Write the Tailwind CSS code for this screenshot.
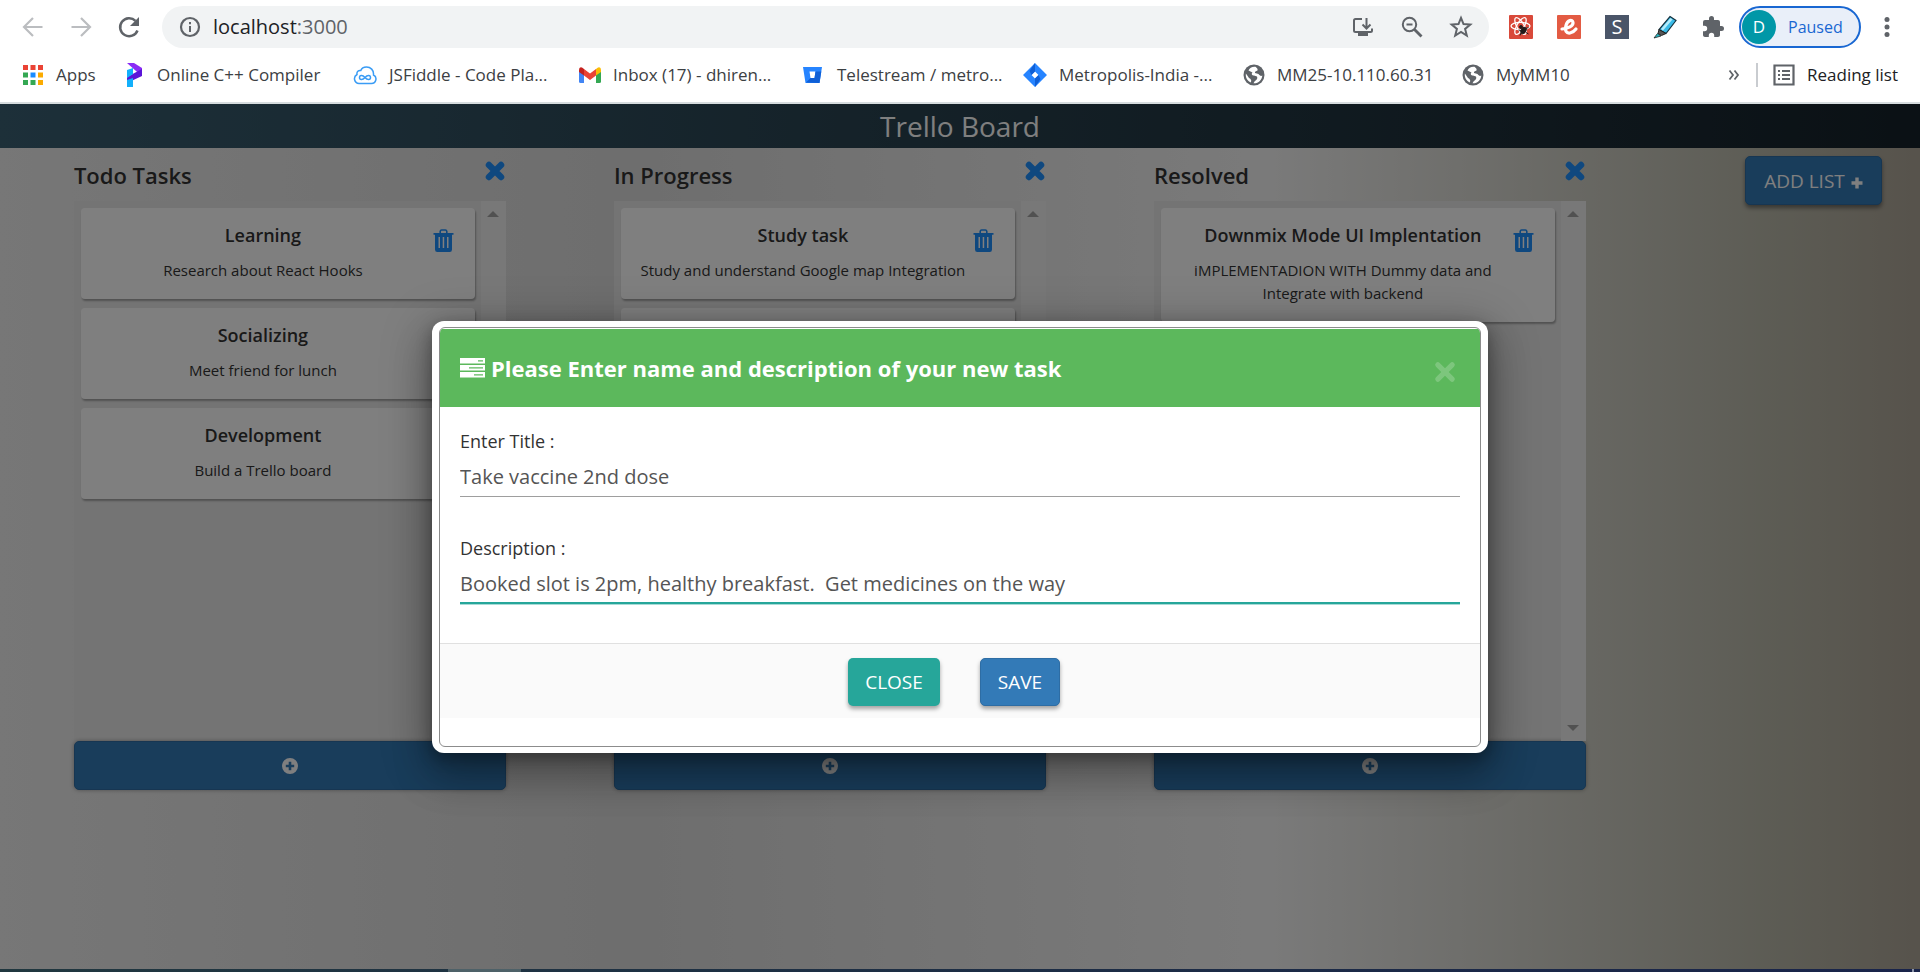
<!DOCTYPE html>
<html lang="en">
<head>
<meta charset="utf-8">
<title>Trello Board</title>
<script src="https://cdn.jsdelivr.net/npm/@tailwindcss/browser@4"></script>
</head>
<body class="flex min-h-screen flex-col overflow-hidden bg-white font-['Open_Sans','Noto_Sans',sans-serif] text-[#333]">

<!-- shared symbols -->
<svg class="hidden" aria-hidden="true">
  <symbol id="times" viewBox="0 0 20 20"><path d="M4.500 4.500 15.500 15.500M15.500 4.500 4.500 15.500" stroke="currentColor" stroke-width="5.800" stroke-linecap="round" fill="none"/></symbol>
  <symbol id="trash" viewBox="0 0 21 23"><path d="M7.2 4.5V2.3Q7.4 1 8.6 1H12.400Q13.600 1 13.800 2.300V4.500" fill="none" stroke="currentColor" stroke-width="1.600"/><path fill="currentColor" fill-rule="evenodd" d="M0.500 4H20.500V5.800H19V20.500Q19 23 16.700 23H4.300Q2 23 2 20.500V5.800H0.500ZM5.500 8V19H7V8ZM9.700 8V19H11.200V8ZM14 8V19H15.500V8Z"/></symbol>
  <symbol id="plus-circle" viewBox="0 0 16 16"><path fill="currentColor" fill-rule="evenodd" d="M8 0A8 8 0 1 0 8 16A8 8 0 1 0 8 0ZM6.700 3.800H9.300V6.700H12.200V9.300H9.300V12.200H6.700V9.300H3.800V6.700H6.700Z"/></symbol>
  <symbol id="globe" viewBox="0 0 22 22"><circle cx="11" cy="11" r="10.500" fill="#5f6368"/><path fill="#fff" d="M12.500 2.800C9 2.500 6.500 4 5.500 6.500L9.500 8.500C8 10 9 11.500 11 11.500L14 12.500C15 14.500 13.500 16 11.500 17.500L10.500 19.300C15.500 19.600 19 16 19.300 11.500C18 12.500 16.500 11.500 15.500 10L12 9C11.500 7.500 13 7 14.500 6.500C15 5 14 4 12.500 2.800ZM2.900 9.500C2.300 13.500 4.500 17 7.700 18.500C9 16.500 8 15 6 14C5 12.500 4 11 2.900 9.500Z"/></symbol>
</svg>

<!-- browser chrome -->
<header class="shrink-0 border-b-2 border-[#d6dcde] bg-white pb-1.5">
  <div class="flex h-[54px] items-center pl-[21px] pr-[21px]">
    <button aria-label="Back" class="mr-6 text-[#bbbdc0]"><svg class="size-6" viewBox="0 0 24 24" fill="none" stroke="currentColor" stroke-width="2.200"><path d="M21.500 12H3M12 3 3 12l9 9"/></svg></button>
    <button aria-label="Forward" class="mr-6 text-[#bbbdc0]"><svg class="size-6" viewBox="0 0 24 24" fill="none" stroke="currentColor" stroke-width="2.200"><path d="M2.500 12H21M12 3l9 9-9 9"/></svg></button>
    <button aria-label="Reload" class="mr-[21px] text-[#5f6368]"><svg class="size-6" viewBox="0 0 24 24" fill="none"><path d="M20.500 15.500A9 9 0 1 1 18.500 5.800" stroke="currentColor" stroke-width="2.500"/><path d="M22 2V11H13Z" fill="currentColor"/></svg></button>
    <div class="flex h-[42px] min-w-0 flex-1 items-center rounded-full bg-[#f1f3f4] pl-[17px] pr-4 text-[#5f6368]">
      <svg class="mr-3 size-[22px]" viewBox="0 0 22 22"><circle cx="11" cy="11" r="9" fill="none" stroke="currentColor" stroke-width="2.200"/><path fill="currentColor" d="M10 10h2v6h-2zM10 6h2v2.200h-2z"/></svg>
      <p class="flex-1 text-[20px] leading-7"><span class="text-[#202124]">localhost</span>:3000</p>
      <button aria-label="Install app" class="mr-[27px]"><svg class="size-[22px]" viewBox="0 0 22 22" fill="none" stroke="currentColor" stroke-width="2"><path d="M10 3H3.500Q2 3 2 4.500V14.500Q2 16 3.500 16H18.500Q20 16 20 14.500V12.500"/><path d="M14.500 2V12M10.500 8.500 14.500 12.500 18.500 8.500"/><path d="M6 18.500H16" stroke-width="3"/></svg></button>
      <button aria-label="Zoom" class="mr-[26px]"><svg class="size-[22px]" viewBox="0 0 22 22" fill="none" stroke="currentColor" stroke-width="2"><circle cx="8.500" cy="8.500" r="6.700"/><path d="M5.500 8.500h6"/><path d="M13.500 13.500 20.500 20.500" stroke-width="2.800"/></svg></button>
      <button aria-label="Bookmark this page"><svg class="size-6" viewBox="0 0 24 24" fill="none" stroke="currentColor" stroke-width="2"><path d="M12 2.800 14.500 9 21.300 9.500 16.100 13.900 17.800 20.500 12 16.900 6.200 20.500 7.900 13.900 2.700 9.500 9.500 9Z"/></svg></button>
    </div>
    <div class="ml-5 flex items-center gap-6">
      <svg class="size-6" viewBox="0 0 24 24"><rect width="24" height="24" rx="1" fill="#d9493a"/><g fill="none" stroke="#fff" stroke-width="1.300"><ellipse cx="11.500" cy="11" rx="9.500" ry="3.600"/><ellipse cx="11.500" cy="11" rx="9.500" ry="3.600" transform="rotate(60 11.500 11)"/><ellipse cx="11.500" cy="11" rx="9.500" ry="3.600" transform="rotate(120 11.500 11)"/></g><g fill="#201a1a" stroke="#201a1a"><ellipse cx="14.500" cy="15.500" rx="2.200" ry="3.400" transform="rotate(35 14.500 15.500)"/><circle cx="12" cy="12" r="1.400"/><path d="m9.500 15 3 .5M17 13.500l2.500-1M17 17.500l2.500 1.500M12 18l-1 2.500" stroke-width="1"/></g></svg>
      <svg class="size-6" viewBox="0 0 24 24"><rect width="24" height="24" rx="1" fill="#e35b43"/><path d="M5 14C11 13.500 16.500 11 16 7.500C15.500 4 10.500 5 9 10.500C7.500 16 9.500 18.500 13 18C15.500 17.500 17.500 16 19 14" fill="none" stroke="#fff" stroke-width="3.200" stroke-linecap="round"/></svg>
      <span class="grid size-6 place-items-center bg-[#4a5568] text-[20px] leading-6 text-white">S</span>
      <svg class="size-6" viewBox="0 0 24 24"><path d="M17 1.500 23 5.500 13 18.500 6 14.500Z" fill="#39bbe8" stroke="#16323f" stroke-width="1.200"/><path d="M17.500 3 19.500 4.500 10 15.500 8 14Z" fill="#b5ecfb"/><path d="M6 14.500 13 18.500 8.500 20.500 5 18.500Z" fill="#555" stroke="#222"/><path d="M4.500 18.500 8 21 1 23Z" fill="#27b7c4" stroke="#222" stroke-width=".8"/></svg>
      <svg class="size-6" viewBox="0 0 24 24"><path fill="#5f6368" d="M20.500 11H19V7c0-1.100-.9-2-2-2h-4V3.500a2.500 2.500 0 0 0-5 0V5H4a2 2 0 0 0-2 2v3.800h1.500a2.700 2.700 0 0 1 0 5.400H2V20c0 1.100.9 2 2 2h3.800v-1.500a2.700 2.700 0 0 1 5.400 0V22H17c1.100 0 2-.9 2-2v-4h1.500a2.500 2.500 0 0 0 0-5z"/></svg>
    </div>
    <button class="ml-[14px] flex h-[42px] w-[122px] items-center rounded-full border-2 border-[#1967d2] bg-[#e9eff9] pl-px text-[16px] text-[#1967d2]"><span class="mr-3 grid size-[34px] place-items-center rounded-full bg-[#0097a7] text-[17px] text-white">D</span>Paused</button>
    <button aria-label="Menu" class="ml-[14px] text-[#5f6368]"><svg class="size-6" viewBox="0 0 24 24" fill="currentColor"><circle cx="12" cy="4.500" r="2.500"/><circle cx="12" cy="12" r="2.500"/><circle cx="12" cy="19.500" r="2.500"/></svg></button>
  </div>
  <nav class="flex h-[42px] items-center pl-[22px] pr-[22px] text-[17px] whitespace-nowrap text-[#3c4043] [&>a]:flex [&>a]:shrink-0 [&>a]:items-center [&>a]:gap-3">
    <a href="#" class="w-[103px]"><svg class="size-[22px]" viewBox="0 0 22 22"><path fill="#ea4335" d="M1 1h5v5H1zM8.500 1h5v5h-5zM16 1h5v5h-5z"/><path fill="#34a853" d="M1 8.500h5v5H1zM1 16h5v5H1zM8.500 16h5v5h-5z"/><path fill="#1a8cff" d="M8.500 8.500h5v5h-5z"/><path fill="#fbab00" d="M16 8.500h5v5h-5zM16 16h5v5h-5z"/></svg>Apps</a>
    <a href="#" class="w-[228px]"><svg class="h-6 w-5" viewBox="0 0 20 24"><path fill="#8a2cf5" d="M2 0H9L17 5 17 13 11 8Z"/><path fill="#5b14d8" d="M17 6V13L2 20V14Z"/><path fill="#12b0fb" d="M2 7 8 5V11L2 15ZM2 17 8 15V24H2Z"/></svg>Online C++ Compiler</a>
    <a href="#" class="w-[226px]"><svg class="h-[22px] w-6" viewBox="0 0 24 22" fill="none" stroke="#3a9cf5" stroke-width="1.500"><path d="M6 19.500H18.500A4.500 4.500 0 0 0 20.500 11C21 6 17.500 3 13.500 3C10.500 3 8.500 4.500 7.800 6.500C5.500 6 3.500 7.500 4 10.500A4.800 4.800 0 0 0 6 19.500Z"/><path d="M12 13.500C9.500 10.500 6.500 11 6.500 13.500S9.500 16.500 12 13.500S17.500 11 17.500 13.500S14.500 16.500 12 13.500Z"/></svg>JSFiddle - Code Pla...</a>
    <a href="#" class="w-[224px]"><svg class="size-[22px]" viewBox="0 0 22 22"><path fill="#4285f4" d="M0 7 5 10V19H1.500Q0 19 0 17.500Z"/><path fill="#34a853" d="M22 7 17 10V19H20.500Q22 19 22 17.500Z"/><path fill="#fbbc04" d="M17 5 19 3.500Q22 2.500 22 6V8L17 11.500Z"/><path fill="#c5221f" d="M5 5 3 3.500Q0 2.500 0 6V8L5 11.500Z"/><path fill="#ea4335" d="M5 5 11 9.500 17 5V11.500L11 16 5 11.500Z"/></svg>Inbox (17) - dhiren...</a>
    <a href="#" class="w-[220px]"><svg class="size-[22px]" viewBox="0 0 22 22"><path fill="#2684ff" fill-rule="evenodd" d="M0 3H19L16.500 19H2.500ZM6.500 7.500 7.500 14H11.500L12.500 7.500Z"/><path fill="#0f5fd6" d="M18.300 7.500H12.500L11.500 14H7.500L3 18.500 16.500 19Z"/></svg>Telestream / metro...</a>
    <a href="#" class="w-[220px]"><svg class="size-6" viewBox="0 0 24 24"><path fill="#2684ff" fill-rule="evenodd" d="M12 0 24 12 12 24 0 12ZM12 8.500 8.500 12 12 15.500 15.500 12Z"/><path fill="#0f5fd6" d="M12 0V8.500L8.500 12 6.500 8ZM12 24V15.500L15.500 12 17.500 16Z"/></svg>Metropolis-India -...</a>
    <a href="#" class="w-[219px]"><svg class="size-[22px]"><use href="#globe"/></svg>MM25-10.110.60.31</a>
    <a href="#"><svg class="size-[22px]"><use href="#globe"/></svg>MyMM10</a>
    <button aria-label="More bookmarks" class="ml-auto mr-4"><svg class="size-3" viewBox="0 0 12 12" fill="none" stroke="#5f6368" stroke-width="1.800"><path d="M1.500 1.500 5 6 1.500 10.500M6.500 1.500 10 6 6.500 10.500"/></svg></button>
    <a href="#" class="h-6 border-l-2 border-[#c9ccd0] pl-[15px] text-[#202124]"><svg class="size-[22px]" viewBox="0 0 22 22" fill="none" stroke="#5f6368"><path stroke-width="2.200" d="M1.500 1.500h19v19h-19z"/><path stroke-width="2" d="M5 7h2M9 7h8M5 11h2M9 11h8M5 15h2M9 15h8"/></svg>Reading list</a>
  </nav>
</header>

<!-- application -->
<div class="relative flex flex-1 flex-col bg-[linear-gradient(to_right,#eeeeee,#dcdcdc_33%,#f5f5f5_66%,#bab9aa_92%,#aea698)]">
  <h1 class="h-11 bg-linear-to-r/srgb from-[#3a6073] to-[#16222a] text-center text-[28px] leading-[44px] text-white">Trello Board</h1>
  <main class="flex flex-1 items-start gap-27 pl-[3.85%] pr-[38px]">
    <section class="w-[24%] max-w-[432px] shrink-0">
      <div class="flex h-[53px] items-start justify-between pt-3">
        <h2 class="text-[22px] leading-[30px] font-semibold">Todo Tasks</h2>
        <button aria-label="Remove Todo Tasks" class="text-[#1e90ff]"><svg class="size-[22px]"><use href="#times"/></svg></button>
      </div>
      <div class="flex h-[540px] bg-[#e9e9e9]">
        <div class="flex flex-1 flex-col gap-[9px] py-[7px] pl-[7px] pr-1.5">
          <article class="flex rounded-sm bg-white pb-[17px] pl-3 pr-[21px] pt-[13px] shadow-[1px_2px_2px_rgba(0,0,0,0.3)]">
            <div class="flex-1 text-center"><h3 class="mb-2.5 text-[18px] leading-7 font-semibold">Learning</h3><p class="text-[15px] leading-[23px]">Research about React Hooks</p></div>
            <button aria-label="Delete Learning" class="mt-2 self-start text-[#1e90ff]"><svg class="h-[23px] w-[21px]"><use href="#trash"/></svg></button>
          </article>
          <article class="flex rounded-sm bg-white pb-[17px] pl-3 pr-[21px] pt-[13px] shadow-[1px_2px_2px_rgba(0,0,0,0.3)]">
            <div class="flex-1 text-center"><h3 class="mb-2.5 text-[18px] leading-7 font-semibold">Socializing</h3><p class="text-[15px] leading-[23px]">Meet friend for lunch</p></div>
            <button aria-label="Delete Socializing" class="mt-2 self-start text-[#1e90ff]"><svg class="h-[23px] w-[21px]"><use href="#trash"/></svg></button>
          </article>
          <article class="flex rounded-sm bg-white pb-[17px] pl-3 pr-[21px] pt-[13px] shadow-[1px_2px_2px_rgba(0,0,0,0.3)]">
            <div class="flex-1 text-center"><h3 class="mb-2.5 text-[18px] leading-7 font-semibold">Development</h3><p class="text-[15px] leading-[23px]">Build a Trello board</p></div>
            <button aria-label="Delete Development" class="mt-2 self-start text-[#1e90ff]"><svg class="h-[23px] w-[21px]"><use href="#trash"/></svg></button>
          </article>
        </div>
        <div class="flex w-[25px] flex-col items-center justify-between bg-[#f1f1f1] py-2.5 text-[#a3a3a3]"><svg class="h-1.5 w-3" viewBox="0 0 12 6"><path fill="currentColor" d="M0 6 6 0l6 6z"/></svg><svg class="h-1.5 w-3" viewBox="0 0 12 6"><path fill="currentColor" d="M0 0 6 6l6-6z"/></svg></div>
      </div>
      <button aria-label="Add task to Todo Tasks" class="grid h-[49px] w-full place-items-center rounded-[5px] border border-[#2e6da4] bg-[#337ab7] text-white shadow-[0_0_4px_rgba(0,0,0,0.35)]"><svg class="size-4"><use href="#plus-circle"/></svg></button>
    </section>
    <section class="w-[24%] max-w-[432px] shrink-0">
      <div class="flex h-[53px] items-start justify-between pt-3">
        <h2 class="text-[22px] leading-[30px] font-semibold">In Progress</h2>
        <button aria-label="Remove In Progress" class="text-[#1e90ff]"><svg class="size-[22px]"><use href="#times"/></svg></button>
      </div>
      <div class="flex h-[540px] bg-[#e9e9e9]">
        <div class="flex flex-1 flex-col gap-[9px] py-[7px] pl-[7px] pr-1.5">
          <article class="flex rounded-sm bg-white pb-[17px] pl-3 pr-[21px] pt-[13px] shadow-[1px_2px_2px_rgba(0,0,0,0.3)]">
            <div class="flex-1 text-center"><h3 class="mb-2.5 text-[18px] leading-7 font-semibold">Study task</h3><p class="text-[15px] leading-[23px]">Study and understand Google map Integration</p></div>
            <button aria-label="Delete Study task" class="mt-2 self-start text-[#1e90ff]"><svg class="h-[23px] w-[21px]"><use href="#trash"/></svg></button>
          </article>
          <article class="h-[91px] rounded-sm bg-white shadow-[1px_2px_2px_rgba(0,0,0,0.3)]"></article>
        </div>
        <div class="flex w-[25px] flex-col items-center justify-between bg-[#f1f1f1] py-2.5 text-[#a3a3a3]"><svg class="h-1.5 w-3" viewBox="0 0 12 6"><path fill="currentColor" d="M0 6 6 0l6 6z"/></svg><svg class="h-1.5 w-3" viewBox="0 0 12 6"><path fill="currentColor" d="M0 0 6 6l6-6z"/></svg></div>
      </div>
      <button aria-label="Add task to In Progress" class="grid h-[49px] w-full place-items-center rounded-[5px] border border-[#2e6da4] bg-[#337ab7] text-white shadow-[0_0_4px_rgba(0,0,0,0.35)]"><svg class="size-4"><use href="#plus-circle"/></svg></button>
    </section>
    <section class="w-[24%] max-w-[432px] shrink-0">
      <div class="flex h-[53px] items-start justify-between pt-3">
        <h2 class="text-[22px] leading-[30px] font-semibold">Resolved</h2>
        <button aria-label="Remove Resolved" class="text-[#1e90ff]"><svg class="size-[22px]"><use href="#times"/></svg></button>
      </div>
      <div class="flex h-[540px] bg-[#e9e9e9]">
        <div class="flex flex-1 flex-col gap-[9px] py-[7px] pl-[7px] pr-1.5">
          <article class="flex rounded-sm bg-white pb-[17px] pl-3 pr-[21px] pt-[13px] shadow-[1px_2px_2px_rgba(0,0,0,0.3)]">
            <div class="flex-1 text-center"><h3 class="mb-2.5 text-[18px] leading-7 font-semibold">Downmix Mode UI Implentation</h3><p class="text-[15px] leading-[23px]">iMPLEMENTADION WITH Dummy data and Integrate with backend</p></div>
            <button aria-label="Delete Downmix Mode UI Implentation" class="mt-2 self-start text-[#1e90ff]"><svg class="h-[23px] w-[21px]"><use href="#trash"/></svg></button>
          </article>
        </div>
        <div class="flex w-[25px] flex-col items-center justify-between bg-[#f1f1f1] py-2.5 text-[#a3a3a3]"><svg class="h-1.5 w-3" viewBox="0 0 12 6"><path fill="currentColor" d="M0 6 6 0l6 6z"/></svg><svg class="h-1.5 w-3" viewBox="0 0 12 6"><path fill="currentColor" d="M0 0 6 6l6-6z"/></svg></div>
      </div>
      <button aria-label="Add task to Resolved" class="grid h-[49px] w-full place-items-center rounded-[5px] border border-[#2e6da4] bg-[#337ab7] text-white shadow-[0_0_4px_rgba(0,0,0,0.35)]"><svg class="size-4"><use href="#plus-circle"/></svg></button>
    </section>
    <button class="ml-auto mt-2 flex h-[49px] w-[137px] shrink-0 items-center justify-center gap-1.5 rounded-[5px] border border-[#2e6da4] bg-[#337ab7] pt-0.5 text-[19px] text-white shadow-[0_3px_4px_rgba(0,0,0,0.4)]">ADD LIST<svg class="mt-0.5 size-3" viewBox="0 0 12 12"><path fill="currentColor" d="M4.300.5h3.400v3.800h3.800v3.400H7.700v3.800H4.300V7.700H.5V4.300h3.800z"/></svg></button>
  </main>

  <!-- new task dialog -->
  <div class="absolute inset-0 flex items-center justify-center overflow-hidden bg-black/50 pt-px">
    <div role="dialog" aria-labelledby="dialog-title" class="w-[55%] rounded-xl bg-white px-[7px] py-1.5 shadow-[0_24px_38px_3px_rgba(0,0,0,0.18),0_9px_46px_8px_rgba(0,0,0,0.22),0_5px_15px_rgba(0,0,0,0.3)]">
      <form class="overflow-hidden rounded-md border border-[#8c8c8c] pb-7 pt-px">
        <div class="flex h-[78px] items-center justify-between bg-[#5cb85c] pl-5 pr-6 text-white">
          <h2 id="dialog-title" class="flex items-center gap-1.5 text-[22px] font-bold"><svg class="h-5 w-[25px]" viewBox="0 0 25 20"><path fill="currentColor" fill-rule="evenodd" d="M0 0H25V5.500H0ZM18 2.200V3.400H23V2.200ZM0 7H25V12.500H0ZM9 9.200V10.400H23V9.200ZM0 14H25V19.500H0ZM14 16.200V17.400H23V16.200Z"/></svg>Please Enter name and description of your new task</h2>
          <button type="button" aria-label="Dismiss" class="mt-2 opacity-20"><svg class="size-[22px]" viewBox="0 0 20 20"><path d="M3.500 3.500 16.500 16.500M16.500 3.500 3.500 16.500" stroke="currentColor" stroke-width="4.800" stroke-linecap="round" fill="none"/></svg></button>
        </div>
        <div class="px-5 pb-[39px] pt-[21px]">
          <label for="task-title" class="block text-[18px] leading-[27px] text-[#333]">Enter Title :</label>
          <input id="task-title" type="text" value="Take vaccine 2nd dose" class="mb-[38px] block h-[42px] w-full border-b border-[#9e9e9e] pt-0.5 text-[20px] text-[#555] outline-none">
          <label for="task-description" class="block text-[18px] leading-[27px] text-[#333]">Description :</label>
          <input id="task-description" type="text" value="Booked slot is 2pm, healthy breakfast.  Get medicines on the way" class="block h-[42px] w-full border-b-2 border-[#26a69a] pt-0.5 text-[20px] text-[#555] shadow-[0_1px_0_#a8dbd7] outline-none">
        </div>
        <div class="flex justify-center gap-10 border-t border-[#e0e0e0] bg-[#fafafa] pb-3 pr-3 pt-[14px] text-[19px] text-white">
          <button type="button" class="h-12 w-[92px] rounded-[5px] bg-[#26a69a] shadow-[0_3px_4px_rgba(0,0,0,0.35)]">CLOSE</button>
          <button type="submit" class="h-12 w-20 rounded-[5px] border border-[#2e6da4] bg-[#337ab7] shadow-[0_3px_4px_rgba(0,0,0,0.35)]">SAVE</button>
        </div>
      </form>
    </div>
  </div>
</div>

<!-- taskbar edge -->
<footer class="flex h-[3px] shrink-0 justify-between bg-linear-to-r/srgb from-[#20373f] to-[#19244a] pr-[6px]"><span class="ml-[23.4%] w-[73px] bg-[#4e6168]"></span><span class="w-0.5 bg-[#8b93a8]"></span></footer>
</body>
</html>
